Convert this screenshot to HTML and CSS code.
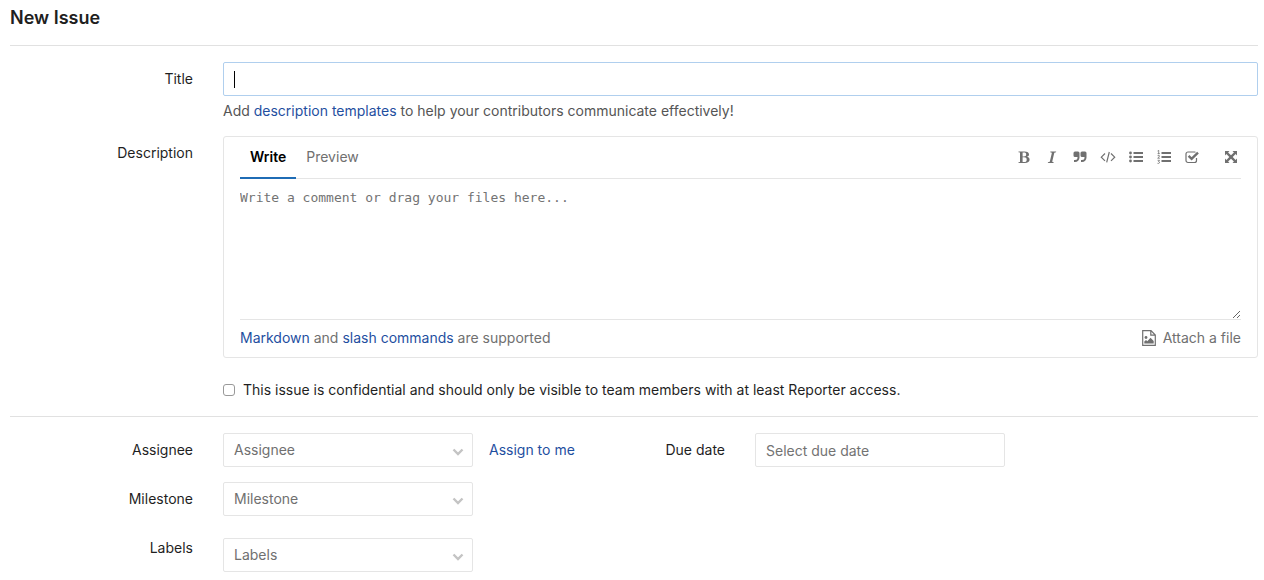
FILE: index.html
```html
<!DOCTYPE html>
<html lang="en">
<head>
<meta charset="utf-8">
<title>New Issue</title>
<link rel="stylesheet" href="styles.css">
</head>
<body>
<main class="page">
  <h1 class="page-title">New Issue</h1>
  <form class="issue-form">
    <section class="section">
      <div class="row">
        <label class="row-label" for="title">Title</label>
        <div>
          <div class="title-field">
            <input class="control title-input" id="title" type="text" autocomplete="off">
            <span class="caret" aria-hidden="true"></span>
          </div>
          <p class="help">Add <a href="#">description templates</a> to help your contributors communicate effectively!</p>
        </div>
      </div>
      <div class="row">
        <label class="row-label" for="description">Description</label>
        <div class="editor">
          <div class="editor-head">
            <div class="tabs">
              <button class="tab tab-active" type="button">Write</button>
              <button class="tab" type="button">Preview</button>
            </div>
            <div class="tools">
              <button class="tool" type="button" aria-label="Bold"><svg viewBox="0 0 14 14"><path fill-rule="evenodd" d="M1.5 1.5H7.4C10.4 1.5 12 2.6 12 4.4C12 5.7 11.1 6.5 9.7 6.8C11.6 7.1 12.6 8.1 12.6 9.6C12.6 11.8 10.9 13 7.8 13H1.5V12.3L3 12V2.5L1.5 2.2ZM5.6 2.4V6.4H6.9C8.5 6.4 9.2 5.7 9.2 4.4C9.2 3 8.5 2.4 7 2.4ZM5.6 7.3V12.1H7.2C8.9 12.1 9.7 11.3 9.7 9.7C9.7 8.1 8.8 7.3 7.1 7.3Z"/></svg></button>
              <button class="tool" type="button" aria-label="Italic"><svg viewBox="0 0 14 14"><path d="M5.4 1.5H11.2L11 2.3L9.3 2.7L7.2 11.8L8.7 12.2L8.5 13H2.8L3 12.2L4.8 11.8L6.9 2.7L5.2 2.3Z"/></svg></button>
              <button class="tool" type="button" aria-label="Quote"><svg viewBox="0 0 14 14"><path d="M2 1.5H5A1.5 1.5 0 0 1 6.5 3V7.5A4.5 4.5 0 0 1 2 12H1V10H2A2.5 2.5 0 0 0 4.5 7.5V7H2A1.5 1.5 0 0 1 .5 5.5V3A1.5 1.5 0 0 1 2 1.5ZM9 1.5H12A1.5 1.5 0 0 1 13.5 3V7.5A4.5 4.5 0 0 1 9 12H8V10H9A2.5 2.5 0 0 0 11.5 7.5V7H9A1.5 1.5 0 0 1 7.5 5.5V3A1.5 1.5 0 0 1 9 1.5Z"/></svg></button>
              <button class="tool" type="button" aria-label="Code"><svg class="code" viewBox="0 0 16 14"><path class="line" d="M5 3.5L1.3 7.2L5 10.9M11 3.5L14.7 7.2L11 10.9M9.3 2L6.7 12.4"/></svg></button>
              <button class="tool" type="button" aria-label="Bullet list"><svg viewBox="0 0 14 14"><path d="M4.5 2H14V4H4.5ZM4.5 6H14V8H4.5ZM4.5 10H14V12H4.5Z"/><circle cx="1.5" cy="3" r="1.4"/><circle cx="1.5" cy="7" r="1.4"/><circle cx="1.5" cy="11" r="1.4"/></svg></button>
              <button class="tool" type="button" aria-label="Numbered list"><svg viewBox="0 0 14 14"><path d="M4.5 2H14V4H4.5ZM4.5 6H14V8H4.5ZM4.5 10H14V12H4.5Z"/><path class="digits" d="M.6 1L1.7 .3V3.6M.6 3.6H2.8M.6 5.6Q2.5 4.6 2.5 6Q2.3 6.9 .7 8.2H2.9M.6 10.3H2.5L1.5 11.5Q2.8 11.6 2.5 12.8Q2 13.8 .5 13.3"/></svg></button>
              <button class="tool" type="button" aria-label="Task list"><svg viewBox="0 0 14 14"><path class="line" d="M11.5 8V10.5A2 2 0 0 1 9.5 12.500H3A2 2 0 0 1 1 10.500V4A2 2 0 0 1 3 2H9.500L10.500 2.300"/><path class="check" d="M3.600 5.800L6.600 8.800L13 2.600"/></svg></button>
              <button class="tool tool-last" type="button" aria-label="Full screen"><svg viewBox="0 0 14 14"><path d="M1 1H5.5L4.100 2.400L7 5.300L9.900 2.400L8.500 1H13V5.500L11.600 4.100L8.700 7L11.600 9.900L13 8.500V13H8.500L9.900 11.600L7 8.700L4.100 11.600L5.500 13H1V8.500L2.400 9.900L5.300 7L2.400 4.100L1 5.500Z"/></svg></button>
            </div>
          </div>
          <textarea class="editor-text" id="description" placeholder="Write a comment or drag your files here..."></textarea>
          <div class="editor-foot">
            <span><a href="#">Markdown</a> and <a href="#">slash commands</a> are supported</span>
            <button class="attach" type="button"><svg class="attach-icon" viewBox="0 0 16 16"><path class="line" d="M1.700 .7H10L14.300 5V15.300H1.700ZM9.800 .9V5.200H14.100"/><circle cx="5" cy="7.500" r="1.400"/><path d="M3.300 13.500V11.500L5 9.900L6.300 11.200L9.500 7.800L12.700 11V13.500Z"/></svg>Attach a file</button>
          </div>
        </div>
      </div>
      <div class="row confidential">
        <label class="check-label"><input class="checkbox" type="checkbox">This issue is confidential and should only be visible to team members with at least Reporter access.</label>
      </div>
    </section>
    <section class="section meta">
      <div class="meta-main">
        <div class="meta-row">
          <label class="row-label" for="assignee">Assignee</label>
          <div class="picker-line">
            <div class="picker"><select class="control" id="assignee"><option>Assignee</option></select><svg class="chevron" viewBox="0 0 12 8"><path d="M1.500 1.500L6 6L10.500 1.500"/></svg></div>
            <a href="#">Assign to me</a>
          </div>
        </div>
        <div class="meta-row">
          <label class="row-label" for="milestone">Milestone</label>
          <div class="picker"><select class="control" id="milestone"><option>Milestone</option></select><svg class="chevron" viewBox="0 0 12 8"><path d="M1.500 1.500L6 6L10.500 1.500"/></svg></div>
        </div>
        <div class="meta-row">
          <label class="row-label" for="labels">Labels</label>
          <div class="picker picker-low"><select class="control" id="labels"><option>Labels</option></select><svg class="chevron" viewBox="0 0 12 8"><path d="M1.500 1.500L6 6L10.500 1.500"/></svg></div>
        </div>
      </div>
      <div class="due">
        <label class="row-label" for="due">Due date</label>
        <input class="control due-input" id="due" type="text" placeholder="Select due date">
      </div>
    </section>
  </form>
</main>
</body>
</html>
```
FILE: styles.css
```css
* { box-sizing: border-box; }

body {
  margin: 0;
  background: #fff;
  color: #1f1f1f;
  font: 14px/20px Inter, "Liberation Sans", sans-serif;
}

a { color: #1f4f9f; text-decoration: none; }

button, input, select, textarea { font: inherit; color: inherit; }

button { border: 0; padding: 0; background: none; cursor: pointer; }

svg { fill: currentColor; }

.line { fill: none; stroke: currentColor; stroke-width: 1.2; }

.page { padding: 6px 6px 6px 10px; }

.page-title { margin: 0 0 15px; font-size: 18px; line-height: 24px; font-weight: 600; }

.section { border-top: 1px solid #e1e1e1; padding-top: 16px; }

.row {
  display: grid;
  grid-template-columns: calc((100% + 30px) / 6 - 30px) minmax(0, 1fr);
  column-gap: 30px;
}

.row-label { padding-top: 7px; text-align: right; }

.control {
  display: block;
  width: 100%;
  height: 34px;
  padding: 6px 10px;
  border: 1px solid #e5e5e5;
  border-radius: 2px;
  background: #fff;
  outline: 0;
}

.control::placeholder { color: #737373; opacity: 1; }

.title-field { position: relative; }

.title-input { border-color: #b0cfee; caret-color: transparent; }

.caret { position: absolute; left: 11px; top: 9px; width: 1px; height: 17px; background: #000; }

.help { margin: 5px 0 15px; color: #555; }

.editor { border: 1px solid #e5e5e5; border-radius: 3px; padding: 0 16px; color: #707070; }

.editor-head {
  display: flex;
  justify-content: space-between;
  border-bottom: 1px solid #e5e5e5;
}

.tabs { display: flex; margin-bottom: -1px; }

.tab { padding: 10px; border-bottom: 2px solid transparent; }

.tab-active { border-color: #1f6cb5; color: #000; font-weight: 600; }

.tools { display: flex; align-items: center; gap: 12px; padding: 0 2px 1px 0; }

.tool { display: flex; justify-content: center; width: 16px; }

.tool svg { width: 14px; height: 14px; }

.tool .code { width: 16px; }

.tool-last { margin-left: 11px; }

.check { fill: none; stroke: currentColor; stroke-width: 2.4; }

.digits { fill: none; stroke: currentColor; stroke-width: 0.8; }

.editor-text {
  display: block;
  width: 100%;
  height: 141px;
  padding: 9px 0;
  border: 0;
  border-bottom: 1px solid #e5e5e5;
  outline: 0;
  resize: vertical;
  font: 13px/20px "DejaVu Sans Mono", monospace;
}

.editor-text::placeholder { color: #737373; opacity: 1; }

.editor-foot { display: flex; justify-content: space-between; padding: 8px 0 9px; }

.attach { display: flex; align-items: center; gap: 6px; }

.attach-icon { width: 16px; height: 16px; }

.confidential { padding: 22px 0 16px; }

.check-label { grid-column: 2; display: flex; align-items: center; gap: 8px; }

.checkbox {
  appearance: none;
  width: 12px;
  height: 12px;
  margin: 0;
  border: 1px solid #999;
  border-radius: 3px;
}

.checkbox:checked { background: #1f6cb5; }

.meta { display: grid; grid-template-columns: 1fr 1fr; column-gap: 30px; }

.meta-main { display: grid; gap: 15px; align-content: start; }

.meta-row {
  display: grid;
  grid-template-columns: calc((100% + 30px) / 3 - 30px) minmax(0, 1fr);
  column-gap: 30px;
}

.picker-line { display: flex; align-items: center; gap: 16px; }

.picker { position: relative; width: 250px; }

.picker-low { margin-top: 7px; }

.picker .control { appearance: none; color: #707070; }

.chevron {
  position: absolute;
  right: 9px;
  top: 15px;
  width: 12px;
  height: 8px;
  fill: none;
  stroke: #c4c4c4;
  stroke-width: 2.4;
  pointer-events: none;
}

.due { display: flex; align-items: flex-start; gap: 30px; }

.due .row-label { width: 76px; white-space: nowrap; }

.due-input { width: 250px; }
```
